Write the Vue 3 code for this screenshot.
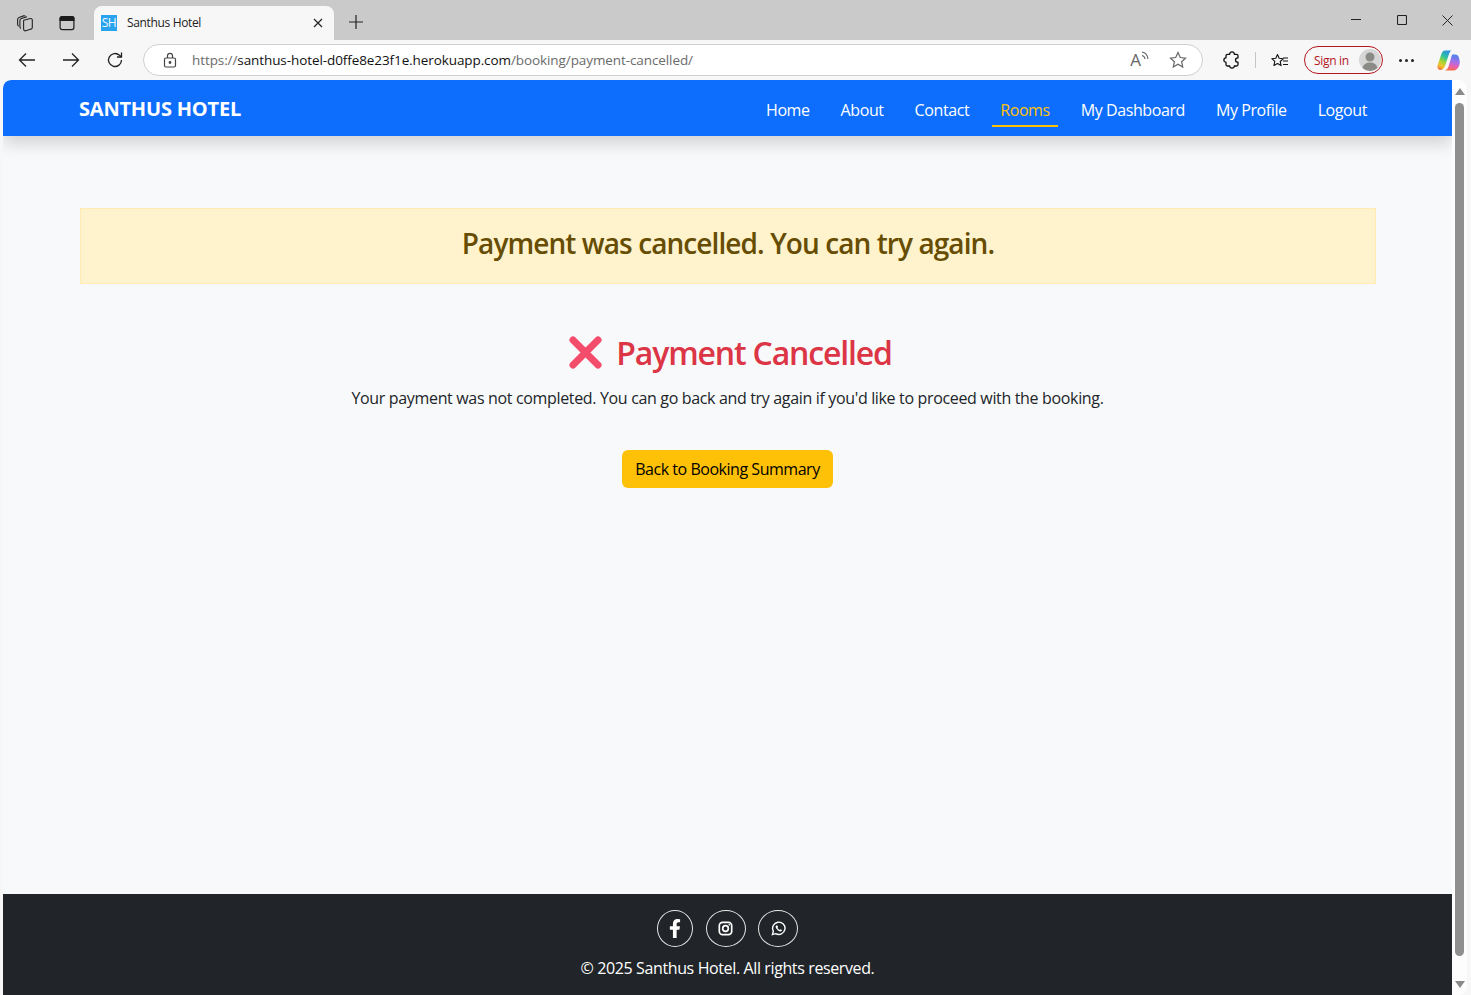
<script setup>
const navItems = [
  { label: 'Home' },
  { label: 'About' },
  { label: 'Contact' },
  { label: 'Rooms', active: true },
  { label: 'My Dashboard' },
  { label: 'My Profile' },
  { label: 'Logout' },
]
</script>

<template>
  <div class="window">
    <div class="tabstrip">
      <div class="strip-left">
        <svg class="ic" width="20" height="20" viewBox="0 0 20 20" fill="none" stroke="#222" stroke-width="1.100"><path d="M8.800 7.200l6.700-1.700c1-.2 1.800.5 1.800 1.500v7.500c0 .8-.5 1.400-1.200 1.600l-5.300 1.700c-1.200.3-2.200-.5-2.200-1.700V8.700c0-.7 0-1.300.2-1.500z"/><path d="M5.800 15.500c-.6-.4-.9-1-.9-1.700V7.500c0-1 .6-1.700 1.500-2l5.600-1.700"/><path d="M3.600 13.200c-.6-.4-1-1.100-1-1.900V6.500c0-1 .6-1.800 1.500-2.100l4.400-1.500c.8-.2 1.500 0 2 .4"/></svg>
        <svg class="ic ic-gap" width="16" height="16" viewBox="0 0 16 16" fill="none" stroke="#1c1c1c" stroke-width="1.200"><rect x="1.100" y="1.600" width="13.800" height="13" rx="2"/><path d="M1.100 3.600a2 2 0 0 1 2-2h9.800a2 2 0 0 1 2 2v1.900H1.100z" fill="#1c1c1c"/></svg>
      </div>
      <div class="tab">
        <span class="favicon">SH</span>
        <span class="tab-title">Santhus Hotel</span>
        <svg class="tab-x" width="10" height="10" viewBox="0 0 10 10" stroke="#222" stroke-width="1.200"><path d="M1 1l8 8M9 1l-8 8"/></svg>
      </div>
      <svg class="plus" width="14" height="14" viewBox="0 0 14 14" stroke="#222" stroke-width="1.200"><path d="M7 0v14M0 7h14"/></svg>
      <div class="win-ctrls">
        <svg class="win-min" width="10" height="10" viewBox="0 0 10 10" stroke="#222"><path d="M0 4.500h10"/></svg>
        <svg width="10" height="10" viewBox="0 0 10 10" stroke="#222" fill="none" stroke-width="1.100"><rect x=".5" y=".5" width="9" height="9" rx="1"/></svg>
        <svg width="11" height="11" viewBox="0 0 11 11" stroke="#222"><path d="M.5.500l10 10M10.500.500l-10 10"/></svg>
      </div>
    </div>

    <div class="toolbar">
      <svg class="nav-ic" width="18" height="16" viewBox="0 0 18 16" fill="none" stroke="#222" stroke-width="1.300"><path d="M17 8H1.500M8 1.500L1.500 8 8 14.500"/></svg>
      <svg class="nav-ic fwd" width="18" height="16" viewBox="0 0 18 16" fill="none" stroke="#222" stroke-width="1.300"><path d="M1 8h15.500M10 1.500L16.500 8 10 14.500"/></svg>
      <svg class="nav-ic reload" width="18" height="18" viewBox="0 0 18 18" fill="none" stroke="#222" stroke-width="1.300"><path d="M15.500 9a6.500 6.500 0 1 1-2-4.700L15.500 6"/><path d="M15.500 1.500V6H11"/></svg>
      <div class="urlbar">
        <svg width="14" height="16" viewBox="0 0 14 16" fill="none" stroke="#444" stroke-width="1.200"><rect x="1.500" y="6" width="11" height="9" rx="1.500"/><path d="M4.500 6V3.800a2.500 2.500 0 0 1 5 0V6"/><circle cx="7" cy="10.500" r=".8" fill="#444"/></svg>
        <span class="url"><span class="url-dim">https://</span><span class="url-host">santhus-hotel-d0ffe8e23f1e.herokuapp.com</span><span class="url-dim">/booking/payment-cancelled/</span></span>
        <span class="read-aloud">A<svg width="8" height="10" viewBox="0 0 8 10" fill="none" stroke="#666" stroke-width="1.100"><path d="M1 1c3 .5 5.500 3 6 7M1 4.500c1.500.3 2.700 1.500 3 3.500"/></svg></span>
        <svg class="star" width="18" height="18" viewBox="0 0 18 18" fill="none" stroke="#666" stroke-width="1.200"><path d="M9 1.500l2.300 5 5.200.6-3.900 3.600 1.100 5.300L9 13.300 4.300 16l1.100-5.300L1.500 7.100l5.200-.6z"/></svg>
      </div>
      <svg class="puzzle" width="18" height="18" viewBox="0 0 18 18" fill="none" stroke="#111" stroke-width="1.300" stroke-linejoin="round"><path d="M6.700 3.300C6.600 1.800 7.700.9 9 .9s2.400.9 2.300 2.400h2.200c.9 0 1.500.6 1.500 1.500v2c-1.600 0-2.500.9-2.500 2.200s.9 2.200 2.500 2.200v2.300c0 .9-.6 1.500-1.500 1.500h-2.200c.1 1.500-1 2.100-2.300 2.100s-2.400-.6-2.300-2.100H4.500c-.9 0-1.500-.6-1.500-1.500v-2.300C1.700 11.200.9 10.300.9 9S1.700 6.800 3 6.800v-2c0-.9.600-1.500 1.500-1.500z"/></svg>
      <span class="divider"></span>
      <svg class="favs" width="18" height="18" viewBox="0 0 18 18" fill="none" stroke="#111" stroke-width="1.100" stroke-linejoin="round"><path d="M7.500 2l1.700 3.800 4 .5-3 2.700.9 4.100-3.600-2.100L3.900 13l.9-4.100-3-2.700 4-.5z" transform="translate(-1 1.500)"/><path d="M12 7h5M12 10h5M12 13.500h5"/></svg>
      <div class="signin">
        <span class="signin-text">Sign in</span>
        <span class="avatar"><svg width="22" height="22" viewBox="0 0 22 22"><circle cx="11" cy="11" r="11" fill="#d6d6d6"/><circle cx="11" cy="8" r="4.500" fill="#8a8a86"/><path d="M3.500 19c1-4 4-5.500 7.500-5.500s6.500 1.500 7.500 5.500A11 11 0 0 1 11 22a11 11 0 0 1-7.500-3z" fill="#8a8a86"/></svg></span>
      </div>
      <span class="dots"><i></i><i></i><i></i></span>
      <svg class="copilot" width="23" height="21" viewBox="0 0 23 21" fill="none">
        <defs>
          <linearGradient id="cpl" x1="0.700" y1="0" x2="0.300" y2="1">
            <stop offset="0" stop-color="#2b8fe6"/>
            <stop offset="0.35" stop-color="#2fc39a"/>
            <stop offset="0.6" stop-color="#a4d432"/>
            <stop offset="0.85" stop-color="#f8c22e"/>
            <stop offset="1" stop-color="#f07a3c"/>
          </linearGradient>
          <linearGradient id="cpr" x1="0.600" y1="0" x2="0.400" y2="1">
            <stop offset="0" stop-color="#4a86ec"/>
            <stop offset="0.45" stop-color="#a86ee8"/>
            <stop offset="0.75" stop-color="#ec5fa8"/>
            <stop offset="1" stop-color="#f4703c"/>
          </linearGradient>
        </defs>
        <path d="M8 .5h6.500C13 1 12.600 2.500 12 4L9 13c-1 3-2 7-5.500 7C1 20 0 17.500.7 15L4 5C5 2 6 .5 8 .5z" fill="url(#cpl)"/>
        <path d="M15.500 4.500H18c2.500 0 3.500 1.500 4 3.500 1 3 1 6 0 8-1 2.500-3 4.500-6 4.500H8c2-.5 3-2.500 3.700-4.500L14 8c.3-1.500.8-3 1.500-3.500z" fill="url(#cpr)"/>
      </svg>
    </div>

    <div class="viewport">
      <div class="page">
        <nav class="navbar">
          <a class="brand">SANTHUS HOTEL</a>
          <ul class="navlist">
            <li v-for="item in navItems" :key="item.label" class="navitem" :class="{ active: item.active }">{{ item.label }}</li>
          </ul>
        </nav>

        <main class="main">
          <div class="alert">Payment was cancelled. You can try again.</div>
          <section class="cancel">
            <h2 class="cancel-title">
              <svg class="cross" width="35" height="35" viewBox="0 0 35 35"><path d="M5 5l25 25M30 5L5 30" stroke="#f44d6c" stroke-width="7" stroke-linecap="round"/></svg>
              <span>Payment Cancelled</span>
            </h2>
            <p class="cancel-text">Your payment was not completed. You can go back and try again if you'd like to proceed with the booking.</p>
            <a class="btn">Back to Booking Summary</a>
          </section>
        </main>

        <footer class="footer">
          <div class="socials">
            <span class="social s-fb"><svg width="12" height="19" viewBox="0 0 320 512" fill="#fff"><path d="M279 288l14-93h-89v-60c0-25 12-50 52-50h41V7s-37-7-72-7c-73 0-121 45-121 125v70H22v93h82v224h100V288z"/></svg></span>
            <span class="social"><svg width="15" height="15" viewBox="0 0 16 16" fill="none" stroke="#fff"><rect x="1.400" y="1.400" width="13.200" height="13.200" rx="3.500" stroke-width="1.800"/><circle cx="8" cy="8" r="3" stroke-width="1.800"/><circle cx="12" cy="4" r=".9" fill="#fff" stroke="none"/></svg></span>
            <span class="social"><svg width="15" height="15" viewBox="0 0 16 16" fill="none"><path d="M1.500 14.500l1-3.600A6.600 6.600 0 1 1 5 13.500z" stroke="#fff" stroke-width="1.500"/><path d="M5.500 4.800c-.8.800-.8 2 .3 3.500 1.200 1.700 2.700 2.900 4.200 2.900 1 0 1.700-.7 1.700-1.500L10 8.700l-.9.800c-.8-.3-1.800-1.300-2.200-2.200l.7-.8-.8-1.700z" fill="#fff"/></svg></span>
          </div>
          <p class="copyright">© 2025 Santhus Hotel. All rights reserved.</p>
        </footer>
      </div>

      <div class="scrollbar">
        <span class="arrow up"></span>
        <span class="thumb"></span>
        <span class="arrow down"></span>
      </div>
    </div>
  </div>
</template>

<style>
html, body { margin: 0; padding: 0; overflow: hidden; }
</style>

<style scoped>
.window {
  width: 1471px;
  height: 995px;
  background: #f7f7f7;
  display: flex;
  flex-direction: column;
  overflow: hidden;
  font-family: "Open Sans", "Noto Sans", sans-serif;
  color: #212529;
}
.tabstrip {
  height: 40px;
  flex: none;
  background: #cacaca;
  display: flex;
  align-items: flex-end;
}
.strip-left {
  width: 94px;
  height: 40px;
  display: flex;
  align-items: center;
  padding-left: 15px;
  box-sizing: border-box;
}
.strip-left .ic { margin-top: 5px; }
.ic-gap { margin-left: 24px; }
.tab {
  width: 240px;
  height: 34px;
  box-sizing: border-box;
  background: #f7f7f7;
  border-radius: 8px 8px 0 0;
  display: flex;
  align-items: center;
  padding: 0 11px 0 7px;
}
.favicon {
  width: 16px;
  height: 16px;
  background: #2aa3ee;
  color: #f2f8fc;
  font: 12px/16px "Open Sans", sans-serif;
  text-align: center;
  letter-spacing: -0.5px;
}
.tab-title {
  margin: 0 0 2px 10px;
  flex: 1;
  font-size: 12px;
  letter-spacing: -0.35px;
  color: #222;
}
.plus { margin: 0 0 6px 15px; transform: translateY(-5px); }
.win-ctrls {
  margin-left: auto;
  height: 40px;
  display: flex;
  align-items: center;
  gap: 35px;
  padding-right: 18px;
}
.win-min { margin-right: 1px; }
.toolbar {
  height: 40px;
  flex: none;
  display: flex;
  align-items: center;
  padding-left: 18px;
  box-sizing: border-box;
}
.nav-ic { flex: none; }
.fwd { margin-left: 26px; }
.reload { margin-left: 26px; }
.urlbar {
  margin-left: 19px;
  width: 1060px;
  height: 32px;
  box-sizing: border-box;
  background: #fff;
  border: 1px solid #cfcfcf;
  border-radius: 16px;
  display: flex;
  align-items: center;
  padding: 0 15px 0 19px;
}
.url {
  margin-left: 15px;
  flex: 1;
  font-size: 13.500px;
  letter-spacing: -0.09px;
  white-space: nowrap;
}
.url-dim { color: #6b6b6b; }
.url-host { color: #111; }
.read-aloud {
  display: flex;
  align-items: flex-start;
  font-size: 17px;
  line-height: 18px;
  color: #666;
}
.star { margin-left: 20px; }
.puzzle { margin-left: 20px; }
.divider {
  width: 1px;
  height: 16px;
  background: #c4c4c4;
  margin-left: 14px;
}
.favs { margin-left: 15px; }
.signin {
  margin-left: 15px;
  width: 79px;
  height: 28px;
  box-sizing: border-box;
  border: 1px solid #b3161d;
  border-radius: 14px;
  display: flex;
  align-items: center;
  justify-content: space-between;
  padding: 0 1px 0 9px;
}
.signin-text {
  font-size: 12px;
  letter-spacing: -0.3px;
  color: #b3161d;
}
.avatar { display: flex; }
.dots {
  display: flex;
  gap: 3px;
  margin-left: 16px;
}
.dots i {
  width: 3px;
  height: 3px;
  border-radius: 50%;
  background: #222;
}
.copilot { margin-left: 23px; }
.viewport {
  flex: 1;
  min-height: 0;
  display: flex;
  padding-left: 3px;
}
.page {
  flex: 1;
  min-width: 0;
  background: #f8f9fa;
  display: flex;
  flex-direction: column;
  border-top-left-radius: 8px;
  overflow: hidden;
}
.navbar {
  height: 56px;
  flex: none;
  box-sizing: border-box;
  background: #0d6efd;
  box-shadow: 0 8px 16px rgba(0, 0, 0, 0.15);
  display: flex;
  align-items: center;
  justify-content: space-between;
  padding: 0 77px 0 76px;
  position: relative;
  border-top-left-radius: 8px;
}
.brand {
  color: #fff;
  font-size: 20px;
  font-weight: 700;
  letter-spacing: -0.2px;
}
.navlist {
  list-style: none;
  margin: 0;
  padding: 0;
  display: flex;
  gap: 15px;
  height: 56px;
  align-items: center;
}
.navitem {
  color: #fff;
  font-size: 16px;
  letter-spacing: -0.41px;
  padding: 6px 8px 3px;
  line-height: 24px;
  border-bottom: 2px solid transparent;
  margin-top: 2px;
}
.navitem.active {
  color: #ffc107;
  border-bottom-color: #ffc107;
}
.main {
  flex: 1;
  padding: 72px 76px 0 77px;
}
.alert {
  height: 76px;
  box-sizing: border-box;
  background: #fff3cd;
  border: 1px solid #ffecb5;
  color: #664d03;
  font-size: 28px;
  font-weight: 600;
  line-height: 68px;
  text-align: center;
  letter-spacing: -0.92px;
}
.cancel {
  margin-top: 48px;
  padding-right: 1px;
  display: flex;
  flex-direction: column;
  align-items: center;
}
.cancel-title {
  margin: 0;
  padding-left: 5px;
  display: flex;
  align-items: center;
  gap: 13px;
  color: #dc3545;
  font-size: 32px;
  line-height: 42px;
  font-weight: 600;
  letter-spacing: -1.18px;
}
.cross { margin-bottom: 2px; }
.cancel-text {
  margin: 12px 0 0;
  font-size: 16px;
  line-height: 24px;
  letter-spacing: -0.34px;
}
.btn {
  margin-top: 40px;
  height: 38px;
  box-sizing: border-box;
  width: 211px;
  background: #ffc107;
  color: #000;
  border-radius: 6px;
  font-size: 16px;
  line-height: 38px;
  text-align: center;
  letter-spacing: -0.47px;
}
.footer {
  height: 101px;
  flex: none;
  background: #212529;
  display: flex;
  flex-direction: column;
  align-items: center;
  padding-top: 16px;
  box-sizing: border-box;
}
.socials {
  display: flex;
  gap: 12.500px;
}
.social {
  width: 40px;
  height: 37px;
  box-sizing: border-box;
  border: 1px solid #e6e6e6;
  border-radius: 50%;
  display: flex;
  align-items: center;
  justify-content: center;
}
.s-fb { width: 36px; }
.copyright {
  margin: 9px 0 0;
  color: #fff;
  font-size: 16px;
  line-height: 24px;
  letter-spacing: -0.38px;
}
.scrollbar {
  width: 15px;
  flex: none;
  background: #fdfdfd;
  margin-right: 4px;
  display: flex;
  flex-direction: column;
  align-items: center;
  padding-top: 8px;
  box-sizing: border-box;
  border-radius: 0 8px 8px 0;
}
.arrow {
  width: 0;
  height: 0;
  border-left: 5px solid transparent;
  border-right: 5px solid transparent;
  flex: none;
}
.arrow.up { border-bottom: 7px solid #8a8a8a; }
.arrow.down { border-top: 7px solid #8a8a8a; margin-top: 25px; }
.thumb {
  width: 9px;
  height: 853px;
  background: #8f8f8f;
  border-radius: 5px;
  margin-top: 8px;
  flex: none;
}
</style>
